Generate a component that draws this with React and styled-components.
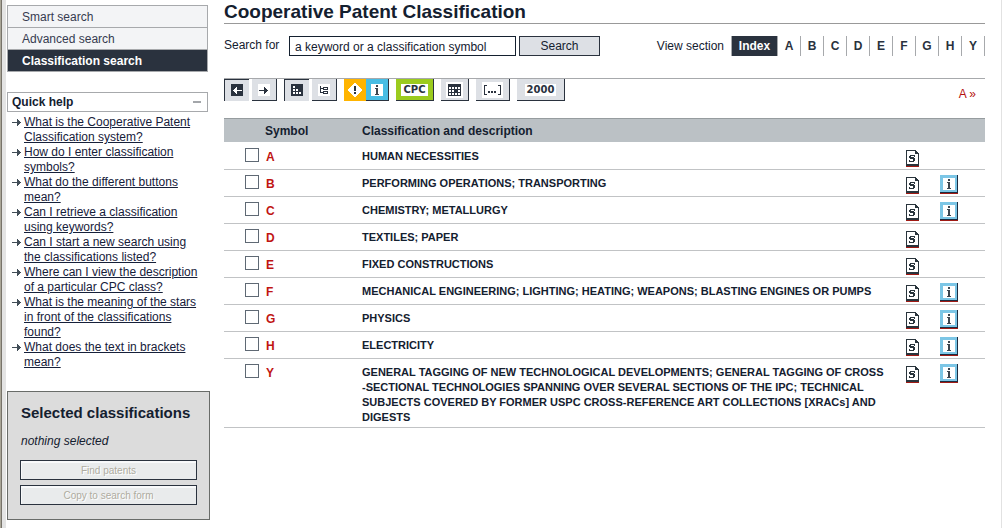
import React from 'react';
import styled, { createGlobalStyle, css } from 'styled-components';

const c = {
  ink: '#14202f',
  dark: '#2a323e',
  line: '#a7a9ac',
  panel: '#dde0e5',
  red: '#b5120f',
};

const GlobalStyle = createGlobalStyle`
  *, *::before, *::after { box-sizing: border-box; }
  body {
    margin: 0;
    background: #fff;
    color: ${c.ink};
    font: 12px/15px "Liberation Sans", Arial, sans-serif;
  }
  h1, h2, p, ul { margin: 0; padding: 0; }
  ul { list-style: none; }
  button, input { font: inherit; color: inherit; border-radius: 0; }
`;

const Page = styled.div`
  display: flex;
  align-items: flex-start;
  gap: 14px;
  min-height: 100vh;
  padding-right: 16px;
  border-left: 1px solid #aaa698;
  border-right: 1px solid #e2e2e2;
  box-shadow: inset 1px 0 #77736a, inset 5px 0 #e4e4e4;
`;

const Sidebar = styled.aside`
  flex: none;
  width: 209px;
  padding: 5px 0 8px 6px;
`;

const Nav = styled.nav`
  margin-right: 2px;
  border: 1px solid ${c.line};
`;

const NavLink = styled.a`
  display: block;
  padding: 4px 14px 2px;
  background: ${(p) => (p.$active ? c.dark : '#f3f4f6')};
  color: ${(p) => (p.$active ? '#fff' : '#363b50')};
  font-weight: ${(p) => (p.$active ? 'bold' : 'normal')};
  text-decoration: none;
  & + & { border-top: 1px solid ${c.line}; }
`;

const HelpHeader = styled.div`
  display: flex;
  align-items: center;
  justify-content: space-between;
  height: 20px;
  margin: 20px 2px 0 0;
  padding: 0 6px 0 4px;
  border: 1px solid ${c.line};
`;

const HelpTitle = styled.h2`
  font-size: 12px;
  line-height: 18px;
`;

const Collapse = styled.button`
  display: flex;
  padding: 0;
  border: 0;
  background: none;
`;

const HelpList = styled.ul`
  padding: 3px 6px 0 5px;
`;

const HelpItem = styled.li`
  display: flex;
  gap: 3px;
  svg { flex: none; margin-top: 4px; }
`;

const HelpLink = styled.a`
  color: #16203a;
  text-decoration: underline;
  text-underline-offset: 1px;
`;

const Selected = styled.section`
  margin-top: 21px;
  padding: 11px 12px 14px;
  border: 1px solid #696c69;
  background: #dcdcdc;
`;

const SelectedTitle = styled.h2`
  padding-left: 1px;
  font-size: 15px;
  line-height: 20px;
  white-space: nowrap;
`;

const Note = styled.p`
  padding: 11px 0 11px 1px;
  font-style: italic;
`;

const PanelButton = styled.button`
  display: block;
  width: 100%;
  height: 20px;
  padding: 0;
  border: 1px solid ${c.dark};
  background: #e9ebec;
  box-shadow: inset 1px 2px #f8f9fa;
  font-size: 10px;
  &:disabled { color: #aeab9f; text-shadow: 1px 1px #fff; }
  & + & { margin-top: 5px; }
`;

const Main = styled.main`
  flex: 1;
  min-width: 0;
`;

const Title = styled.h1`
  border-bottom: 1px solid #999;
  font-size: 19px;
  line-height: 23px;
`;

const SearchRow = styled.div`
  display: flex;
  justify-content: space-between;
  padding: 12px 0 22px;
  line-height: 20px;
`;

const SearchForm = styled.form`
  display: flex;
  gap: 3px;
  label { width: 62px; line-height: 18px; white-space: nowrap; }
`;

const SearchInput = styled.input`
  width: 227px;
  height: 20px;
  padding: 1px 5px 0;
  border: 1px solid ${c.ink};
  background: #fff;
`;

const SearchButton = styled.button`
  width: 81px;
  height: 20px;
  padding: 0;
  border: 1px solid ${c.dark};
  background: ${c.panel};
  line-height: 18px;
`;

const Sections = styled.nav`
  display: flex;
  span { margin-right: 7px; }
`;

const SectionLink = styled.a`
  width: 23px;
  border-right: 1px solid ${c.line};
  color: ${c.dark};
  font-weight: bold;
  text-align: center;
  text-decoration: none;
  ${(p) => p.$active && css`
    width: 47px;
    border-left: 1px solid ${c.line};
    background: ${c.dark};
    color: #fff;
  `}
`;

const Toolbar = styled.div`
  display: flex;
  justify-content: space-between;
  height: 40px;
  border-top: 1px solid ${c.line};
`;

const Tools = styled.div`
  display: flex;
  gap: 7px;
`;

const ToolGroup = styled.div`
  display: flex;
  gap: ${(p) => p.$gap || 0}px;
`;

const Tool = styled.button`
  display: flex;
  align-items: center;
  justify-content: center;
  width: ${(p) => p.$w}px;
  height: 22px;
  padding: 0;
  border: 0 solid ${c.dark};
  border-right-width: 1px;
  background: ${(p) => p.$bg || c.panel};
  box-shadow: inset 0 -1px ${c.dark};
  ${(p) => p.$pressed && css`
    border-width: 0 0 0 1px;
    box-shadow: inset 0 1px ${c.dark};
  `}
  ${(p) => p.$flat && css`
    border-width: 0;
    box-shadow: none;
  `}
`;

const ToolText = styled.span`
  padding: 0 2px;
  background: #fff;
  color: ${c.dark};
  font: bold 10px/12px "DejaVu Sans", sans-serif;
`;

const NextLink = styled.a`
  padding: 8px 9px 0 0;
  color: ${c.red};
  text-decoration: none;
`;

const Table = styled.table`
  width: 100%;
  table-layout: fixed;
  border-spacing: 0;
  th, td { padding: 0; text-align: left; vertical-align: top; }
  th {
    height: 24px;
    padding-top: 2px;
    border-top: 1px solid #969c9f;
    background: #bbc1c5;
    line-height: 21px;
  }
`;

const Col = styled.col`
  width: ${(p) => p.$w}px;
`;

const Row = styled.tr`
  td { height: 27px; border-bottom: 1px solid #c1c3c5; }
  &:first-child td { height: 28px; padding-top: 1px; }
`;

const Check = styled.input`
  appearance: none;
  display: block;
  width: 14px;
  height: 14px;
  margin: 5px 0 0 21px;
  border: 1px solid #5f6974;
  background: #fff;
  &:checked { background: ${c.dark}; }
`;

const SymbolLink = styled.a`
  display: block;
  padding: 7px 0 1px 1px;
  color: #c01512;
  font-weight: bold;
  text-decoration: none;
`;

const Description = styled.div`
  padding: 6px 8px 2px 0;
  font-size: 11px;
  font-weight: bold;
`;

const IconLink = styled.a`
  display: block;
  padding-top: ${(p) => p.$top}px;
  svg { display: block; }
`;

const Pixels = ({ w, h = w, label, children }) => (
  <svg width={w} height={h} viewBox={`0 0 ${w} ${h}`} shapeRendering="crispEdges" role={label ? 'img' : undefined} aria-label={label} aria-hidden={label ? undefined : true}>
    {children}
  </svg>
);

const Bullet = () => (
  <Pixels w={9} h={7}>
    <path d="M0 3h9v1H0zM5 0h1v7H5zM6 1h1v5H6zM7 2h1v3H7z" fill="#414d57" />
  </Pixels>
);

const BackIcon = () => (
  <Pixels w={12}>
    <path d="M0 0h12v12H0z" fill={c.dark} />
    <path d="M2 6h9v1H2zM3 5h2v3H3zM4 4h1v5H4zM5 3h1v7H5z" fill="#fff" />
  </Pixels>
);

const ForwardIcon = () => (
  <Pixels w={12}>
    <path d="M0 0h12v12H0z" fill="#fff" />
    <path d="M1 6h9v1H1zM8 5h1v3H8zM7 4h1v5H7zM6 3h1v7H6z" fill={c.dark} />
  </Pixels>
);

const StepsIcon = () => (
  <Pixels w={12}>
    <path d="M0 0h12v12H0z" fill={c.dark} />
    <path d="M2 2h2v2H2zM2 5h2v2H2zM2 8h2v2H2zM5 5h2v2H5zM5 8h2v2H5zM8 8h2v2H8z" fill="#fff" />
  </Pixels>
);

const TreeIcon = () => (
  <Pixels w={12}>
    <path d="M0 0h12v12H0z" fill="#fff" />
    <path d="M2 2h1v7H2zM3 4h3v1H3zM3 8h3v1H3zM5 3h5v3H5zM5 7h5v3H5z" fill={c.dark} />
    <path d="M6 4h3v1H6zM6 8h3v1H6z" fill="#fff" />
  </Pixels>
);

const WarningIcon = () => (
  <Pixels w={14}>
    <path d="M6 0h2v1h1v1h1v1h1v1h1v1h1v1h1v2h-1v1h-1v1h-1v1h-1v1h-1v1h-1v1H6v-1H5v-1H4v-1H3v-1H2V9H1V8H0V6h1V5h1V4h1V3h1V2h1V1h1z" fill="#fff" />
    <path d="M6 3h2v5H6zM6 9h2v2H6z" fill={c.dark} />
  </Pixels>
);

const InfoGlyph = ({ x, y }) => (
  <g transform={`translate(${x} ${y})`} fill="#3b444e">
    <path d="M2 0h2v2H2zM1 3h3v6h1v1H1v-1h1V4H1z" />
  </g>
);

const InfoIcon = () => (
  <Pixels w={12}>
    <path d="M0 0h12v12H0z" fill="#fff" />
    <InfoGlyph x={3} y={1} />
  </Pixels>
);

const GridIcon = () => (
  <Pixels w={17} h={16}>
    <path d="M0 0h17v16H0z" fill="#fff" />
    <path d="M2 2h13v12H2z" fill={c.dark} />
    <path d="M3 5h2v2H3zM6 5h2v2H6zM9 5h2v2H9zM12 5h2v2h-2zM3 8h2v2H3zM6 8h2v2H6zM12 8h2v2h-2zM3 11h2v2H3zM6 11h2v2H6zM9 11h2v2H9zM12 11h2v2h-2z" fill="#fff" />
  </Pixels>
);

const BracketIcon = () => (
  <Pixels w={21} h={16}>
    <path d="M0 0h21v16H0z" fill="#fff" />
    <path d="M2 3h3v1H3v8h2v1H2zM16 3h3v10h-3v-1h2V4h-2zM6 9h2v2H6zM9 9h2v2H9zM12 9h2v2h-2z" fill={c.dark} />
  </Pixels>
);

const SchemeIcon = () => (
  <Pixels w={13} h={17} label="Scheme">
    <path d="M0 0h10v1h1v1h1v1h1v13H0z" fill="#29343c" />
    <path d="M1 1h8v3h3v10H1z" fill="#fff" />
    <path d="M0 16h13v1H0z" fill="#a01a14" />
    <path d="M4 5h5v2H8V6H5v1h3v1h1v3H8v1H3v-2h1v1h3V9H4V8H3V6h1z" fill="#29343c" />
  </Pixels>
);

const NotesIcon = () => (
  <Pixels w={18} h={19} label="Notes">
    <path d="M0 0h18v18H0z" fill="#1c2c40" />
    <path d="M0 0h17v17H0z" fill="#7cc6e6" />
    <path d="M3 3h12v12H3z" fill="#fff" />
    <path d="M0 18h18v1H0z" fill="#a01a14" />
    <InfoGlyph x={6} y={4} />
  </Pixels>
);

const help = [
  'What is the Cooperative Patent Classification system?',
  'How do I enter classification symbols?',
  'What do the different buttons mean?',
  'Can I retrieve a classification using keywords?',
  'Can I start a new search using the classifications listed?',
  'Where can I view the description of a particular CPC class?',
  'What is the meaning of the stars in front of the classifications found?',
  'What does the text in brackets mean?',
];

const rows = [
  ['A', 'HUMAN NECESSITIES', false],
  ['B', 'PERFORMING OPERATIONS; TRANSPORTING', true],
  ['C', 'CHEMISTRY; METALLURGY', true],
  ['D', 'TEXTILES; PAPER', false],
  ['E', 'FIXED CONSTRUCTIONS', false],
  ['F', 'MECHANICAL ENGINEERING; LIGHTING; HEATING; WEAPONS; BLASTING ENGINES OR PUMPS', true],
  ['G', 'PHYSICS', true],
  ['H', 'ELECTRICITY', true],
  ['Y', <>GENERAL TAGGING OF NEW TECHNOLOGICAL DEVELOPMENTS; GENERAL TAGGING OF CROSS<br />-SECTIONAL TECHNOLOGIES SPANNING OVER SEVERAL SECTIONS OF THE IPC; TECHNICAL SUBJECTS COVERED BY FORMER USPC CROSS-REFERENCE ART COLLECTIONS [XRACs] AND DIGESTS</>, true],
];

export default function App() {
  return (
    <>
      <GlobalStyle />
      <Page>
        <Sidebar>
          <Nav>
            <NavLink href="#smart">Smart search</NavLink>
            <NavLink href="#advanced">Advanced search</NavLink>
            <NavLink href="#classification" $active>Classification search</NavLink>
          </Nav>
          <HelpHeader>
            <HelpTitle>Quick help</HelpTitle>
            <Collapse type="button" aria-label="Collapse quick help">
              <Pixels w={8} h={2}><path d="M0 0h8v2H0z" fill="#a3a6aa" /></Pixels>
            </Collapse>
          </HelpHeader>
          <HelpList>
            {help.map((text) => (
              <HelpItem key={text}>
                <Bullet />
                <HelpLink href="#help">{text}</HelpLink>
              </HelpItem>
            ))}
          </HelpList>
          <Selected>
            <SelectedTitle>Selected classifications</SelectedTitle>
            <Note>nothing selected</Note>
            <PanelButton type="button" disabled>Find patents</PanelButton>
            <PanelButton type="button" disabled>Copy to search form</PanelButton>
          </Selected>
        </Sidebar>
        <Main>
          <Title>Cooperative Patent Classification</Title>
          <SearchRow>
            <SearchForm onSubmit={(e) => e.preventDefault()}>
              <label htmlFor="query">Search for</label>
              <SearchInput id="query" type="text" defaultValue="a keyword or a classification symbol" />
              <SearchButton type="submit">Search</SearchButton>
            </SearchForm>
            <Sections>
              <span>View section</span>
              <SectionLink href="#index" $active>Index</SectionLink>
              {rows.map(([symbol]) => (
                <SectionLink key={symbol} href={`#${symbol}`}>{symbol}</SectionLink>
              ))}
            </Sections>
          </SearchRow>
          <Toolbar>
            <Tools>
              <ToolGroup $gap={3}>
                <Tool $w={25} $pressed aria-label="Previous"><BackIcon /></Tool>
                <Tool $w={25} aria-label="Next"><ForwardIcon /></Tool>
              </ToolGroup>
              <ToolGroup $gap={3}>
                <Tool $w={25} $pressed aria-label="List view"><StepsIcon /></Tool>
                <Tool $w={25} aria-label="Tree view"><TreeIcon /></Tool>
              </ToolGroup>
              <ToolGroup>
                <Tool $w={22} $flat $bg="#ffb400" aria-label="Warnings"><WarningIcon /></Tool>
                <Tool $w={23} $bg="#48bde4" aria-label="Notes"><InfoIcon /></Tool>
              </ToolGroup>
              <Tool $w={38} $bg="#9bcb1e"><ToolText>CPC</ToolText></Tool>
              <Tool $w={28} aria-label="Table"><GridIcon /></Tool>
              <Tool $w={34} aria-label="Text in brackets"><BracketIcon /></Tool>
              <Tool $w={48}><ToolText>2000</ToolText></Tool>
            </Tools>
            <NextLink href="#A">A »</NextLink>
          </Toolbar>
          <Table>
            <colgroup>
              <Col $w={41} />
              <Col $w={97} />
              <col />
              <Col $w={34} />
              <Col $w={45} />
            </colgroup>
            <thead>
              <tr>
                <th />
                <th>Symbol</th>
                <th>Classification and description</th>
                <th />
                <th />
              </tr>
            </thead>
            <tbody>
              {rows.map(([symbol, text, notes]) => (
                <Row key={symbol}>
                  <td><Check type="checkbox" id={`pick-${symbol}`} aria-label={`Select ${symbol}`} /></td>
                  <td><SymbolLink href={`#${symbol}`}>{symbol}</SymbolLink></td>
                  <td><Description>{text}</Description></td>
                  <td><IconLink $top={7} href="#scheme"><SchemeIcon /></IconLink></td>
                  <td>{notes && <IconLink $top={5} href="#notes"><NotesIcon /></IconLink>}</td>
                </Row>
              ))}
            </tbody>
          </Table>
        </Main>
      </Page>
    </>
  );
}
